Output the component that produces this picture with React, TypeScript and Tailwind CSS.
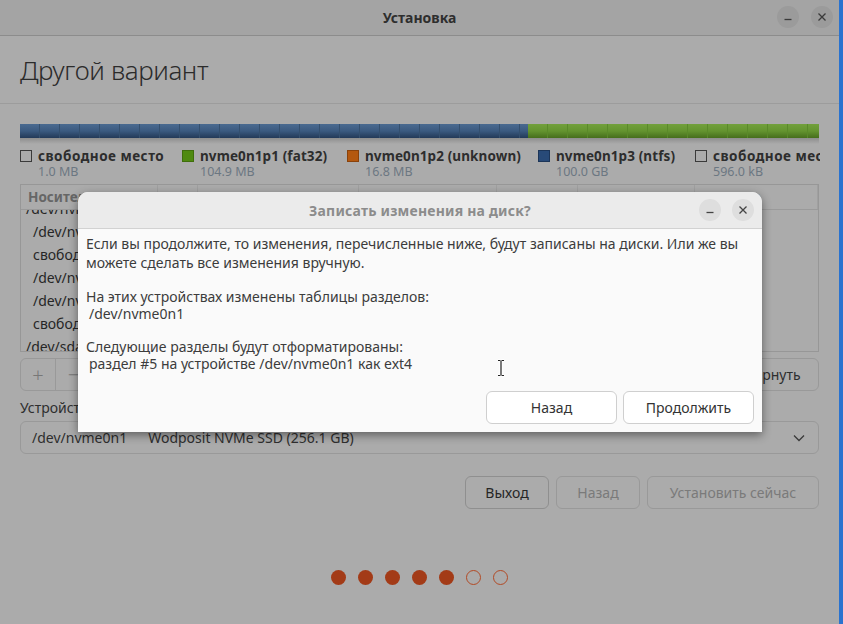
import React from "react";

const font = "font-['Noto_Sans',sans-serif]";

const legend = [
  { name: "свободное место", size: "1.0 MB", box: "bg-[#ababab] border-[#3a3a3a]", x: "w-[162px]", tr: "tracking-[0.5px]" },
  { name: "nvme0n1p1 (fat32)", size: "104.9 MB", box: "bg-[#4f8a10] border-[#3f6e0c]", x: "w-[165px]", tr: "tracking-[0.1px]" },
  { name: "nvme0n1p2 (unknown)", size: "16.8 MB", box: "bg-[#b4580f] border-[#8a420b]", x: "w-[191px]", tr: "tracking-[0.1px]" },
  { name: "nvme0n1p3 (ntfs)", size: "100.0 GB", box: "bg-[#284a78] border-[#1c3558]", x: "w-[157px]", tr: "tracking-[0.1px]" },
  { name: "свободное место", size: "596.0 kB", box: "bg-[#ababab] border-[#3a3a3a]", x: "w-[180px]", tr: "tracking-[0.5px]" },
];

const rows = [
  { dev: "/dev/nvme0n1", indent: false },
  { dev: "/dev/nvme0n1p1", indent: true },
  { dev: "свободное место", indent: true },
  { dev: "/dev/nvme0n1p2", indent: true },
  { dev: "/dev/nvme0n1p3", indent: true },
  { dev: "свободное место", indent: true },
  { dev: "/dev/sda", indent: false },
];

function CircleBtn({ kind, className }: { kind: "min" | "close"; className: string }) {
  return (
    <div className={`w-[22px] h-[22px] rounded-full flex items-center justify-center ${className}`}>
      {kind === "min" ? (
        <svg width="10" height="10" viewBox="0 0 10 10">
          <path d="M1.5 7.5h7" stroke="currentColor" strokeWidth="1.3" />
        </svg>
      ) : (
        <svg width="10" height="10" viewBox="0 0 10 10">
          <path d="M1.5 1.5l7 7M8.5 1.5l-7 7" stroke="currentColor" strokeWidth="1.3" />
        </svg>
      )}
    </div>
  );
}

function DiskBar() {
  const blue = Array.from({ length: 26 });
  const green = Array.from({ length: 15 });
  return (
    <div className="mx-[20px] mt-[20px]">
      <div className="flex h-[14px] overflow-hidden">
        <div className="w-[508px] flex overflow-hidden bg-gradient-to-b from-[#4a6a90] via-[#3b5a80] to-[#233a58]">
          {blue.map((_, i) => (
            <div key={i} className="w-[20px] shrink-0 border-r border-[#34506f]" />
          ))}
        </div>
        <div className="flex-1 flex overflow-hidden bg-gradient-to-b from-[#72a03c] via-[#649430] to-[#466e1c]">
          {green.map((_, i) => (
            <div key={i} className="w-[20px] shrink-0 border-r border-[#5a8a2a]" />
          ))}
        </div>
      </div>
      <div className="h-[6px] bg-gradient-to-b from-[#8e8e8e] to-[#ababab]" />
    </div>
  );
}

function Legend() {
  return (
    <div className="mx-[20px] mt-[3px] flex h-[33px] overflow-hidden w-[800px]">
      {legend.map((l, i) => (
        <div key={i} className={`flex shrink-0 gap-[6px] ${l.x}`}>
          <div className={`w-[12px] h-[12px] shrink-0 mt-[3px] border ${l.box}`} />
          <div className="flex flex-col whitespace-nowrap">
            <span className={`text-[13.5px] font-bold leading-[18px] text-[#2d2d2d] ${l.tr}`}>{l.name}</span>
            <span className="text-[12.5px] leading-[14px] text-[#6b7782]">{l.size}</span>
          </div>
        </div>
      ))}
    </div>
  );
}

function PartitionTable() {
  const cols = [
    { t: "Носитель", w: "w-[137px]" },
    { t: "Тип", w: "w-[40px]" },
    { t: "Точка монтирования", w: "w-[161px]" },
    { t: "Форматировать?", w: "w-[138px]" },
    { t: "Размер", w: "w-[81px]" },
    { t: "Занято", w: "w-[117px]" },
    { t: "Система", w: "flex-1" },
  ];
  return (
    <div className="mx-[20px] mt-[4px] h-[168px] border border-[#979797] flex flex-col overflow-hidden">
      <div className="relative z-10 flex h-[25px] bg-[#ababab] border-b border-[#9a9a9a] shrink-0">
        {cols.map((c, i) => (
          <div
            key={i}
            className={`${c.w} border-r border-[#a0a0a0] px-[7px] text-[13.5px] font-bold text-[#666] leading-[24px] whitespace-nowrap overflow-hidden`}
          >
            {c.t}
          </div>
        ))}
      </div>
      <div className="flex flex-col -mt-[13px] text-[14px] text-[#262626]">
        {rows.map((r, i) => (
          <div key={i} className={`h-[23px] leading-[23px] whitespace-nowrap ${r.indent ? "pl-[12px]" : "pl-[5px]"}`}>
            {r.dev}
          </div>
        ))}
      </div>
    </div>
  );
}

export default function App() {
  return (
    <div className={`relative w-[843px] h-[624px] overflow-hidden bg-[#2a73cf] ${font}`}>
      <div className="w-[839px] h-[624px] bg-[#ababab] rounded-tl-[4px] rounded-tr-[10px] flex flex-col">
        {/* title bar */}
        <div className="h-[36px] shrink-0 bg-[#a4a4a4] border-b border-[#8c8c8c] flex items-center relative">
          <div className="flex-1 text-center text-[14px] font-bold text-[#2e2e2e]">Установка</div>
          <div className="absolute right-[6px] top-[6px] flex gap-[12px]">
            <CircleBtn kind="min" className="bg-[#9b9b9b] text-[#3a3a3a]" />
            <CircleBtn kind="close" className="bg-[#9b9b9b] text-[#3a3a3a]" />
          </div>
        </div>

        <div className="h-[68px] shrink-0 border-b border-[#9c9c9c] flex items-center px-[20px]">
          <h1 className="text-[26px] font-light text-[#2b2b2b] tracking-[-0.4px] leading-none">Другой вариант</h1>
        </div>

        <DiskBar />
        <Legend />
        <PartitionTable />

        {/* add/remove + revert */}
        <div className="mx-[20px] mt-[6px] flex justify-between">
          <div className="flex h-[33px] border border-[#999] rounded-[6px] text-[#777]">
            <div className="w-[35px] flex items-center justify-center border-r border-[#999] text-[20px] font-light">+</div>
            <div className="w-[35px] flex items-center justify-center text-[20px] font-light">−</div>
          </div>
          <div className="h-[33px] w-[92px] border border-[#999] rounded-[6px] flex items-center justify-center text-[14px] text-[#2e2e2e]">
            Вернуть
          </div>
        </div>

        <div className="mx-[20px] mt-[8px] text-[14px] text-[#2e2e2e] leading-[18px]">
          Устройство для установки загрузчика:
        </div>
        <div className="mx-[20px] mt-[4px] h-[33px] border border-[#999] rounded-[6px] flex items-center px-[11px] text-[14px] text-[#2e2e2e]">
          <span>/dev/nvme0n1</span>
          <span className="ml-[21px]">Wodposit NVMe SSD (256.1 GB)</span>
          <svg className="ml-auto mr-[2px]" width="12" height="8" viewBox="0 0 12 8">
            <path d="M1 1.5l5 5 5-5" fill="none" stroke="#3a3a3a" strokeWidth="1.3" />
          </svg>
        </div>

        <div className="mx-[20px] mt-[22px] flex justify-end gap-[7px] text-[14px]">
          <div className="w-[84px] h-[33px] border border-[#8f8f8f] rounded-[6px] flex items-center justify-center text-[#262626]">Выход</div>
          <div className="w-[84px] h-[33px] border border-[#999] rounded-[6px] flex items-center justify-center text-[#7a7a7a]">Назад</div>
          <div className="w-[172px] h-[33px] border border-[#999] rounded-[6px] flex items-center justify-center text-[#7a7a7a]">Установить сейчас</div>
        </div>

        <div className="mt-[61px] flex justify-center gap-[12px]">
          {[0, 1, 2, 3, 4, 5, 6].map((i) => (
            <div
              key={i}
              className={
                i < 5
                  ? "w-[15px] h-[15px] rounded-full bg-[#a33b17]"
                  : "w-[15px] h-[15px] rounded-full border border-[#b24a25]"
              }
            />
          ))}
        </div>
      </div>

      {/* modal dialog */}
      <div className="absolute z-20 left-[78px] top-[192px] w-[684px] h-[240px] rounded-t-[10px] bg-[#fafafa] shadow-[0_3px_10px_rgba(0,0,0,0.45)] flex flex-col">
        <div className="h-[37px] shrink-0 rounded-t-[10px] bg-[#ebebeb] border-b border-[#d2d2d2] flex items-center relative">
          <div className="flex-1 text-center text-[14px] font-bold text-[#8c8c8c] tracking-[0.2px]">Записать изменения на диск?</div>
          <div className="absolute right-[8px] top-[7px] flex gap-[11px]">
            <CircleBtn kind="min" className="bg-[#dedede] text-[#444]" />
            <CircleBtn kind="close" className="bg-[#dedede] text-[#444]" />
          </div>
        </div>
        <div className="px-[8px] pt-[5px] text-[14px] text-[#3c3c3c]">
          <p className="leading-[19px]">
            Если вы продолжите, то изменения, перечисленные ниже, будут записаны на диски. Или же вы
            <br />
            можете сделать все изменения вручную.
          </p>
          <p className="mt-[16px] leading-[17px]">На этих устройствах изменены таблицы разделов:</p>
          <p className="pl-[3px] leading-[17px]">/dev/nvme0n1</p>
          <p className="mt-[16px] leading-[17px]">Следующие разделы будут отформатированы:</p>
          <p className="pl-[3px] leading-[17px]">раздел #5 на устройстве /dev/nvme0n1 как ext4</p>
        </div>
        <div className="mt-auto mb-[8px] mr-[8px] flex justify-end gap-[6px] text-[14px] text-[#333]">
          <div className="w-[131px] h-[33px] bg-white border border-[#cfcfcf] rounded-[6px] flex items-center justify-center">Назад</div>
          <div className="w-[131px] h-[33px] bg-white border border-[#cfcfcf] rounded-[6px] flex items-center justify-center">Продолжить</div>
        </div>
        {/* text cursor */}
        <svg className="absolute left-[418px] top-[167px]" width="10" height="18" viewBox="0 0 10 18">
          <path d="M2 1.5h2.5M5.5 1.5H8M5 2v14M2 16.5h2.5M5.5 16.5H8" stroke="#fff" strokeWidth="3" />
          <path d="M2 1.5h2.5M5.5 1.5H8M5 2v14M2 16.5h2.5M5.5 16.5H8" stroke="#222" strokeWidth="1.2" />
        </svg>
      </div>
    </div>
  );
}
